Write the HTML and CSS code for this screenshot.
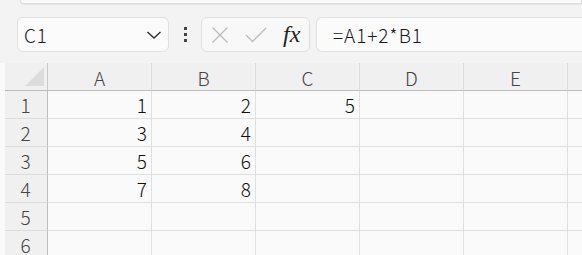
FILE: index.html
```html
<!DOCTYPE html>
<html>
<head>
<meta charset="utf-8">
<link rel="stylesheet" href="styles.css">
</head>
<body>
<div class="app">
  <div class="topbar"></div>
  <div class="toolbar">
    <div class="namebox">
      <span class="name">C1</span>
      <svg class="chev" width="16" height="10" viewBox="0 0 16 10"><path d="M1.5 2 L8 8 L14.5 2" fill="none" stroke="#333" stroke-width="1.5"/></svg>
    </div>
    <div class="grip"><i></i><i></i><i></i></div>
    <div class="fxbox">
      <svg class="ico" width="18" height="18" viewBox="0 0 18 18"><path d="M1.5 1.5 L16.5 16.5 M16.5 1.5 L1.5 16.5" stroke="#bdbdbd" stroke-width="1.4" fill="none"/></svg>
      <svg class="ico ok" width="22" height="16" viewBox="0 0 22 16"><path d="M1 8 L7.5 14.5 L21 1" stroke="#bdbdbd" stroke-width="1.4" fill="none"/></svg>
      <span class="fx">fx</span>
    </div>
    <div class="formula">=A1+2*B1</div>
  </div>
  <div class="sheet">
    <div class="corner"><span class="tri"></span></div>
    <div class="ch">A</div><div class="ch">B</div><div class="ch">C</div><div class="ch">D</div><div class="ch">E</div><div class="ch last"></div>

    <div class="rh">1</div><div class="c">1</div><div class="c">2</div><div class="c">5</div><div class="c"></div><div class="c"></div><div class="c last"></div>
    <div class="rh">2</div><div class="c">3</div><div class="c">4</div><div class="c"></div><div class="c"></div><div class="c"></div><div class="c last"></div>
    <div class="rh">3</div><div class="c">5</div><div class="c">6</div><div class="c"></div><div class="c"></div><div class="c"></div><div class="c last"></div>
    <div class="rh">4</div><div class="c">7</div><div class="c">8</div><div class="c"></div><div class="c"></div><div class="c"></div><div class="c last"></div>
    <div class="rh">5</div><div class="c"></div><div class="c"></div><div class="c"></div><div class="c"></div><div class="c"></div><div class="c last"></div>
    <div class="rh">6</div><div class="c"></div><div class="c"></div><div class="c"></div><div class="c"></div><div class="c"></div><div class="c last"></div>
  </div>
</div>
</body>
</html>
```
FILE: styles.css
```css
html, body {
  margin: 0;
  padding: 0;
  background: #f3f3f3;
  overflow: hidden;
}
.app {
  width: 582px;
  height: 255px;
  overflow: hidden;
  font-family: "Noto Sans CJK SC", "Noto Sans", sans-serif;
  font-weight: 300;
  color: #222;
}
.topbar {
  margin-left: 20px;
  height: 3px;
  background: #fbfbfb;
  border: 1px solid #dcdcdc;
  border-top: none;
  border-radius: 0 0 0 6px;
  box-shadow: 0 1px 2px rgba(0,0,0,0.06);
}
.toolbar {
  display: flex;
  align-items: center;
  height: 35px;
  margin-top: 13px;
  padding-left: 17px;
}
.namebox {
  box-sizing: border-box;
  width: 152px;
  height: 35px;
  background: #fbfbfb;
  border: 1px solid #e0e0e0;
  border-radius: 6px;
  display: flex;
  align-items: center;
  justify-content: space-between;
  padding: 0 6px 0 6px;
}
.name {
  font-size: 19px;
  letter-spacing: 0.8px;
  color: #1a1a1a;
  line-height: 1;
  margin-top: -1px;
}
.chev { margin-top: 1px; }
.grip {
  width: 32px;
  display: flex;
  flex-direction: column;
  align-items: center;
  gap: 3px;
}
.grip i {
  display: block;
  width: 3px;
  height: 3px;
  background: #444;
}
.fxbox {
  box-sizing: border-box;
  width: 109px;
  height: 35px;
  background: #f8f8f8;
  border: 1px solid #e0e0e0;
  border-radius: 6px;
  display: flex;
  align-items: center;
  padding-left: 9px;
}
.ico { display: block; }
.ok { margin-left: 16px; }
.fx {
  margin-left: 16px;
  font-family: "Liberation Serif", serif;
  font-style: italic;
  font-weight: 400;
  font-size: 24px;
  color: #222;
  line-height: 1;
  margin-top: -2px;
}
.formula {
  box-sizing: border-box;
  margin-left: 6px;
  flex: 1;
  height: 35px;
  background: #fbfbfb;
  border: 1px solid #e0e0e0;
  border-right: none;
  border-radius: 6px 0 0 6px;
  display: flex;
  align-items: center;
  padding-left: 16px;
  font-size: 19px;
  letter-spacing: 0.9px;
  color: #1a1a1a;
}
.sheet {
  margin-top: 11px;
  display: grid;
  grid-template-columns: 48px repeat(5, 104px) 1fr;
  grid-auto-rows: 28px;
  background: #fafafa;
}
.corner {
  background: #f0f0f0;
  border-right: 1px solid #c8c8c8;
  border-bottom: 1px solid #bdbdbd;
  margin-left: 5px;
  position: relative;
}
.tri {
  position: absolute;
  left: 20px;
  bottom: 4px;
  width: 0;
  height: 0;
  border-left: 19px solid transparent;
  border-bottom: 19px solid #dcdcdc;
}
.ch {
  background: #f0f0f0;
  border-right: 1px solid #dcdcdc;
  border-bottom: 1px solid #bdbdbd;
  display: flex;
  align-items: center;
  justify-content: center;
  font-size: 19px;
  color: #444;
  line-height: 1;
  padding-top: 1px;
}
.rh {
  background: #f0f0f0;
  margin-left: 5px;
  border-right: 1px solid #bdbdbd;
  border-bottom: 1px solid #dcdcdc;
  display: flex;
  align-items: center;
  justify-content: center;
  font-size: 19px;
  color: #444;
  line-height: 1;
  padding-right: 1px;
}
.c {
  border-right: 1px solid #e0e0e0;
  border-bottom: 1px solid #e0e0e0;
  display: flex;
  align-items: center;
  justify-content: flex-end;
  padding-right: 4px;
  font-size: 19px;
  color: #111;
  line-height: 1;
}
.last { border-right: none; }
```
